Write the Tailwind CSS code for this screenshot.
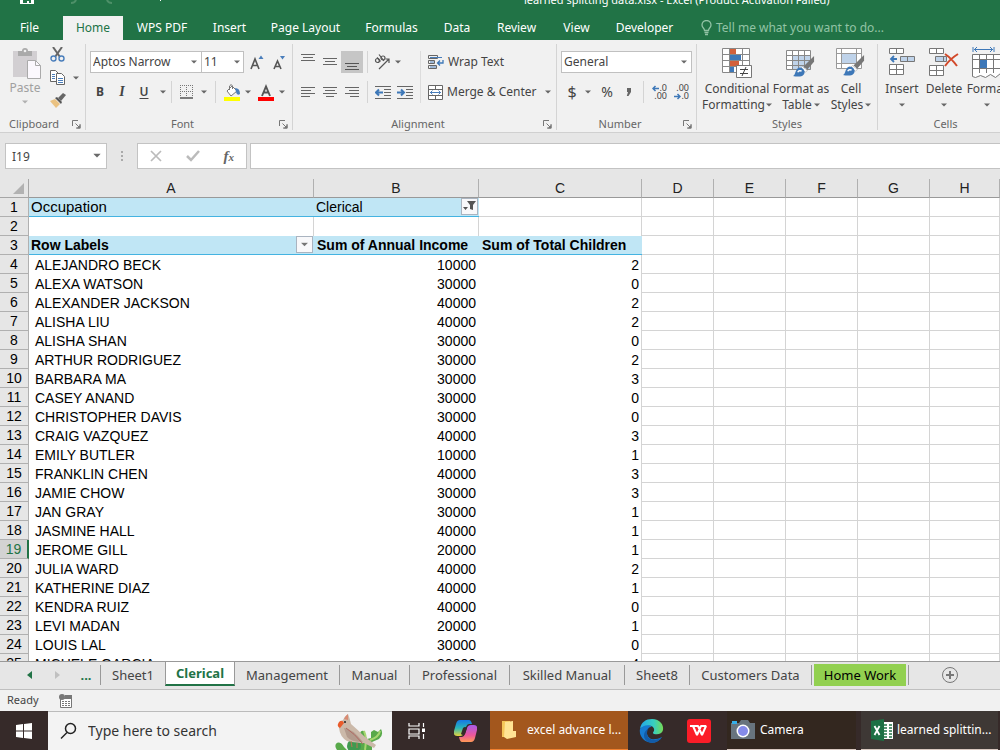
<!DOCTYPE html>
<html lang="en">
<head>
<meta charset="utf-8">
<title>learned splitting data.xlsx - Excel</title>
<script src="https://cdn.jsdelivr.net/npm/@tailwindcss/browser@4"></script>
</head>
<body class="h-screen overflow-hidden flex flex-col bg-[#e6e6e6] text-xs text-[#444] font-['Noto_Sans','Open_Sans',sans-serif]">

<svg class="hidden">
  <symbol id="caret" viewBox="0 0 6 4"><path d="M0 .5h6L3 3.500z" fill="currentColor" fill-opacity=".8"/></symbol>
  <symbol id="launcher" viewBox="0 0 9 9"><path d="M.5 6V.5H6M3.500 3.500l4 4M8 4v4H4" fill="none" stroke="#777"/><path d="M8.500 4.500v4h-4z" fill="#777"/></symbol>
  <symbol id="brush" viewBox="0 0 24 24"><path d="M23 1v6l-7 8-4-3z" fill="#777"/><path d="M11 12l5 4-2 2-5-4z" fill="#fff" stroke="#999" stroke-width=".6"/><path d="M8 13c3 0 6 3 5 6-1 4-7 4-12 3 3-1 2-8 7-9z" fill="#3e78b8"/><path d="M6 18c1-2 3-2 4-1" fill="none" stroke="#fff" stroke-width="1.500"/></symbol>
</svg>

<header class="shrink-0 bg-[#217346] text-white">
  <div class="h-4 relative overflow-hidden">
    <svg class="absolute left-5 top-0" width="150" height="6" viewBox="0 0 150 6"><path d="M0 0h14v4H0z" fill="#fff"/><path d="M3 0h8v3H9V1H7v2H3z" fill="#217346"/><path d="M51 3q4 0 5-3M92 3q-4 0-5-3" stroke="#4d9068" stroke-width="2" fill="none"/><path d="M140.500 0v1" stroke="#fff"/></svg>
    <h1 class="absolute left-[524px] -top-2 leading-4 text-[11px] whitespace-nowrap">learned splitting data.xlsx - Excel (Product Activation Failed)</h1>
  </div>
  <nav class="flex h-6 leading-6 whitespace-nowrap">
    <button class="w-[63px] pr-1">File</button>
    <button class="w-[60px] bg-[#f1f1f1] text-[#217346]">Home</button>
    <button class="w-[78px]">WPS PDF</button>
    <button class="w-[57px]">Insert</button>
    <button class="w-[95px]">Page Layout</button>
    <button class="w-[77px]">Formulas</button>
    <button class="w-[54px]">Data</button>
    <button class="w-[65px]">Review</button>
    <button class="w-[55px]">View</button>
    <button class="w-[81px]">Developer</button>
    <button class="ml-4 flex items-center gap-1 text-[#92c3a5]">
      <svg width="11" height="16" viewBox="0 0 11 16" fill="none" stroke="currentColor" stroke-width="1.300"><path d="M3.500 10.500C3.500 8 1 8 1 5a4.500 4.500 0 019 0c0 3-2.500 3-2.500 5.500zM3.500 12.500h4M4 14.500h3"/></svg>
      Tell me what you want to do...
    </button>
  </nav>
</header>

<section class="shrink-0 h-[93px] flex bg-[#f1f1f1] border-b border-[#d0d0d0] pt-1 pb-[2px] overflow-hidden whitespace-nowrap" aria-label="Ribbon">

  <div class="w-[86px] shrink-0 border-r border-[#d4d4d4] flex flex-col">
    <div class="flex-1 flex">
      <button class="w-[50px] flex flex-col items-center justify-start text-[#a0a0a0] pt-1">
        <svg class="ml-1" width="30" height="32" viewBox="0 0 30 32"><path d="M1 3h24v26H1z" fill="#d2cfd2"/><path d="M6 8V3h4q0-3 3-3t3 3h4v5z" fill="#aaa"/><circle cx="13" cy="3" r="1.300" fill="#f1f1f1"/><path d="M15.500 12.500h8l5 5v13h-13z" fill="#fbf8fd" stroke="#aaa"/><path d="M23.500 12.500v5h5" fill="none" stroke="#aaa"/></svg>
        <span class="leading-4">Paste</span>
        <svg class="mt-1" width="6" height="4"><use href="#caret"/></svg>
      </button>
      <div class="flex flex-col items-start gap-2 pt-[3px]">
        <button aria-label="Cut"><svg width="15" height="15" viewBox="0 0 15 15" fill="none"><path d="M3 0l7 10M12 0L5 10" stroke="#666" stroke-width="2"/><circle cx="3.500" cy="11.500" r="2.500" stroke="#4a7ebb" stroke-width="1.400"/><circle cx="11.500" cy="11.500" r="2.500" stroke="#4a7ebb" stroke-width="1.400"/></svg></button>
        <button class="flex items-center gap-2" aria-label="Copy"><svg width="15" height="15" viewBox="0 0 15 15" fill="#fff" stroke="#666"><path d="M.5.5h5l3 3v8h-8z"/><path d="M2 4.500h3M2 6.500h3M2 8.500h3" stroke="#4a7ebb"/><path d="M6.500 3.500h5l3 3v8h-8z"/><path d="M8 8.500h5M8 10.500h5M8 12.500h5" stroke="#4a7ebb"/></svg><svg width="6" height="4"><use href="#caret"/></svg></button>
        <button aria-label="Format Painter"><svg width="16" height="15" viewBox="0 0 16 15"><path d="M0 8l5-2 5 5-4 4z" fill="#eac282"/><path d="M5 5l2-1 5 5-1 2z" fill="#555"/><path d="M8 5l5-5 3 2-5 6z" fill="#666"/></svg></button>
      </div>
    </div>
    <div class="h-3 leading-3 flex justify-between pl-[9px] pr-1 items-center text-[11px] text-[#666]">Clipboard <svg width="9" height="9"><use href="#launcher"/></svg></div>
  </div>

  <div class="w-[207px] shrink-0 border-r border-[#d4d4d4] flex flex-col">
    <div class="flex-1 flex flex-col gap-2 pt-[7px] pl-1">
      <div class="flex items-center h-[22px]">
        <label class="relative"><select aria-label="Font name" class="appearance-none block w-[112px] h-[22px] border border-[#c0c0c0] bg-white px-[2px]"><option>Aptos Narrow</option></select><svg class="absolute right-[5px] top-[9px]" width="6" height="4"><use href="#caret"/></svg></label>
        <label class="relative -ml-px"><select aria-label="Font size" class="appearance-none block w-[43px] h-[22px] border border-[#c0c0c0] bg-white px-[2px]"><option>11</option></select><svg class="absolute right-1 top-[9px]" width="6" height="4"><use href="#caret"/></svg></label>
        <button class="ml-[6px] w-4" aria-label="Increase font size"><svg width="14" height="15" viewBox="0 0 14 15"><path d="M1 14L5 4l4 10M2.500 10.500h5" fill="none" stroke="#555" stroke-width="1.600"/><path d="M8.500 4l2.500-3.500L13.500 4z" fill="#4a7ebb"/></svg></button>
        <button class="ml-[6px] w-4" aria-label="Decrease font size"><svg width="14" height="15" viewBox="0 0 14 15"><path d="M2 14l3.500-8L9 14M3 11.500h5" fill="none" stroke="#555" stroke-width="1.600"/><path d="M8 1h5l-2.500 3.500z" fill="#4a7ebb"/></svg></button>
      </div>
      <div class="flex items-center h-[22px]">
        <button class="w-5 font-bold">B</button>
        <button class="w-6 italic font-bold font-['Liberation_Serif',serif] text-sm">I</button>
        <button class="w-5 font-semibold underline underline-offset-2">U</button>
        <button class="w-[17px] flex justify-center" aria-label="Underline style"><svg width="6" height="4"><use href="#caret"/></svg></button>
        <i class="w-px h-[22px] bg-[#d4d4d4]"></i>
        <button class="ml-2 flex items-center gap-2" aria-label="Borders"><svg width="13" height="14" viewBox="0 0 13 14"><path d="M.5 0v12M6.500 0v12M12.500 0v12M0 .5h13M0 6.500h13" stroke="#777" stroke-dasharray="1 1" fill="none"/><path d="M0 13h13" stroke="#555" stroke-width="1.500"/></svg><svg width="6" height="4"><use href="#caret"/></svg></button>
        <i class="ml-2 w-px h-[22px] bg-[#d4d4d4]"></i>
        <button class="ml-2 flex items-center gap-[5px]" aria-label="Fill color"><svg width="16" height="17" viewBox="0 0 16 17"><path d="M3 7l5-5 5 5-6 5z" fill="#fff" stroke="#777"/><path d="M5.500 6V2q2-3 3 0v3" fill="none" stroke="#777"/><path d="M11 4q5 0 5 6-3 2-4-2z" fill="#4a7ebb"/><path d="M0 13h16v4H0z" fill="#ff0"/></svg><svg width="6" height="4"><use href="#caret"/></svg></button>
        <button class="ml-[7px] flex items-center gap-[5px]" aria-label="Font color"><svg width="16" height="17" viewBox="0 0 16 17"><path d="M4 12L8 2.500 12 12M5.500 8.500h5" fill="none" stroke="#555" stroke-width="1.900"/><path d="M0 13h16v4H0z" fill="red"/></svg><svg width="6" height="4"><use href="#caret"/></svg></button>
      </div>
    </div>
    <div class="h-3 leading-3 flex items-center pr-1 text-[11px] text-[#666]"><span class="flex-1 text-center">Font</span><svg width="9" height="9"><use href="#launcher"/></svg></div>
  </div>

  <div class="w-[264px] shrink-0 border-r border-[#d4d4d4] flex flex-col">
    <div class="flex-1 flex pt-[7px] pl-1">
      <div class="flex flex-col gap-2">
        <div class="flex items-center h-[22px]">
          <button class="size-[22px] grid place-items-center" aria-label="Top align"><svg width="14" height="16" stroke="#666"><path d="M0 .5h14M2 3.500h10M0 6.500h14"/></svg></button>
          <button class="size-[22px] grid place-items-center" aria-label="Middle align"><svg width="14" height="16" stroke="#666"><path d="M0 4.500h14M2 7.500h10M0 10.500h14"/></svg></button>
          <button class="size-[22px] grid place-items-center bg-[#c6c6c6]" aria-label="Bottom align"><svg width="14" height="16" stroke="#555"><path d="M0 9.500h14M2 12.500h10M0 15.500h14"/></svg></button>
          <i class="mx-1 w-px h-[22px] bg-[#d4d4d4]"></i>
          <button class="flex items-center gap-1 pl-[2px]" aria-label="Orientation"><svg width="17" height="16" viewBox="0 0 17 16" fill="none" stroke="#555" stroke-width="1.200"><circle cx="3.500" cy="6.500" r="2"/><path d="M3 3.500l3.500 4M5 .5L10 7"/><circle cx="9" cy="4" r="2"/><path d="M5 15L15 5M11.500 5H15v4"/></svg><svg width="6" height="4"><use href="#caret"/></svg></button>
        </div>
        <div class="flex items-center h-[22px]">
          <button class="size-[22px] grid place-items-center" aria-label="Align left"><svg width="14" height="12" stroke="#666"><path d="M0 1.500h14M0 4.500h10M0 7.500h14M0 10.500h9"/></svg></button>
          <button class="size-[22px] grid place-items-center" aria-label="Center"><svg width="14" height="12" stroke="#666"><path d="M0 1.500h14M2 4.500h10M0 7.500h14M3 10.500h8"/></svg></button>
          <button class="size-[22px] grid place-items-center" aria-label="Align right"><svg width="14" height="12" stroke="#666"><path d="M0 1.500h14M4 4.500h10M0 7.500h14M5 10.500h9"/></svg></button>
          <i class="mx-1 w-px h-[22px] bg-[#d4d4d4]"></i>
          <button class="size-[22px] grid place-items-center" aria-label="Decrease indent"><svg width="16" height="13" fill="none" stroke="#666"><path d="M0 .5h16M9 3.500h7M9 6.500h7M9 9.500h7M0 12.500h16"/><path d="M1 6.500h7M4 3.500l-3 3 3 3" stroke="#3e78b8" stroke-width="2"/></svg></button>
          <button class="size-[22px] grid place-items-center" aria-label="Increase indent"><svg width="16" height="13" fill="none" stroke="#666"><path d="M0 .5h16M9 3.500h7M9 6.500h7M9 9.500h7M0 12.500h16"/><path d="M0 6.500h7M4 3.500l3 3-3 3" stroke="#3e78b8" stroke-width="2"/></svg></button>
        </div>
      </div>
      <i class="ml-1 w-px h-[52px] bg-[#dcdcdc]"></i>
      <div class="ml-[7px] flex flex-col gap-2">
        <button class="flex items-center gap-1 h-[22px]"><svg width="16" height="16" viewBox="0 0 16 16" fill="none" stroke="#666"><path d="M.5 1.500h9v3h-9z M.5 6.500h6v3h-6zM.5 11.500h8v3h-8z"/><path d="M2 3.500h12M2 8h4M2 13h6" stroke="#4a7ebb"/><path d="M15 6v3h-5M12 6.500L9.500 9l2.500 2.500" stroke="#3e78b8" stroke-width="1.300"/></svg>Wrap Text</button>
        <button class="flex items-center gap-1 h-[22px]"><svg width="15" height="15" viewBox="0 0 15 15" fill="#fff" stroke="#666"><path d="M.5.5h14v14H.5zM.5 4.500h14M.5 10.500h14M7.500.5v4M7.500 10.500v4"/><path d="M2 7.500h11M4.500 5.500l-2 2 2 2M10.500 5.500l2 2-2 2" stroke="#4a7ebb" fill="none"/></svg>Merge &amp; Center<svg class="ml-1" width="6" height="4"><use href="#caret"/></svg></button>
      </div>
    </div>
    <div class="h-3 leading-3 flex items-center pr-1 text-[11px] text-[#666]"><span class="flex-1 text-center">Alignment</span><svg width="9" height="9"><use href="#launcher"/></svg></div>
  </div>

  <div class="w-[140px] shrink-0 border-r border-[#d4d4d4] flex flex-col">
    <div class="flex-1 flex flex-col gap-2 pt-[7px] px-1">
      <label class="relative"><select aria-label="Number format" class="appearance-none block w-full h-[22px] border border-[#c0c0c0] bg-white px-[2px]"><option>General</option></select><svg class="absolute right-[5px] top-[9px]" width="6" height="4"><use href="#caret"/></svg></label>
      <div class="flex items-center h-[22px]">
        <button class="w-[22px] text-base leading-4" aria-label="Accounting format">$</button>
        <svg width="6" height="4" class="mx-[2px]"><use href="#caret"/></svg>
        <button class="w-[28px] text-sm leading-4">%</button>
        <button class="w-4 grid place-items-center" aria-label="Comma style"><svg width="6" height="9" viewBox="0 0 6 9"><path d="M1 0h4v4L2.500 8H.8L2 4H1z" fill="#666"/></svg></button>
        <i class="ml-[6px] w-px h-[22px] bg-[#d4d4d4]"></i>
        <button class="ml-[7px] w-4 h-4 flex flex-col text-[9px] leading-2 items-end" aria-label="Increase decimal"><span class="flex items-center"><svg width="7" height="7" fill="none" stroke="#3e78b8" stroke-width="1.500"><path d="M1 3.500h6M3.500 1L1 3.500 3.500 6"/></svg>.0</span><span>.00</span></button>
        <button class="ml-[6px] w-4 h-4 flex flex-col text-[9px] leading-2 items-end" aria-label="Decrease decimal"><span>.00</span><span class="flex items-center"><svg width="7" height="7" fill="none" stroke="#3e78b8" stroke-width="1.500"><path d="M0 3.500h6M3.500 1L6 3.500 3.500 6"/></svg>.0</span></button>
      </div>
    </div>
    <div class="h-3 leading-3 flex items-center pr-1 text-[11px] text-[#666]"><span class="flex-1 text-center">Number</span><svg width="9" height="9"><use href="#launcher"/></svg></div>
  </div>

  <div class="w-[181px] shrink-0 border-r border-[#d4d4d4] flex flex-col">
    <div class="flex-1 flex pl-[5px] pt-[3px] leading-4">
      <button class="w-[70px] flex flex-col items-center justify-start">
        <svg width="30" height="32" viewBox="0 0 30 32"><path d="M.5 1.500h27v24H.5z" fill="#fff"/><path d="M8 2h6v5H8zM8 14h9v5H8z" fill="#d2613c"/><path d="M8 8h11v5H8zM8 20h4v5H8z" fill="#3e78b8"/><path d="M.5 1.500h27v24H.5zM.5 7.500h27M.5 13.500h27M.5 19.500h27M7.500 1v24M20.500 1v24" fill="none" stroke="#888"/><path d="M14.500 18.500h15v12h-15z" fill="#fff" stroke="#777"/><path d="M18 22.500h8M18 26.500h8M24 20l-4 9" stroke="#444"/></svg>
        <span class="mt-[2px]">Conditional</span>
        <span class="flex items-center gap-px">Formatting <svg width="6" height="4"><use href="#caret"/></svg></span>
      </button>
      <button class="w-[58px] flex flex-col items-center justify-start">
        <svg width="30" height="32" viewBox="0 0 30 32"><path d="M.5 3.500h24v19H.5z" fill="#fff"/><path d="M6 8h19v15H6z" fill="#bfd3ea"/><path d="M.5 3.500h24v19H.5zM.5 8.500h24M.5 13.500h24M.5 18.500h24M6.500 3v20M12.500 3v20M18.500 3v20" fill="none" stroke="#888"/><svg x="6" y="8" width="23" height="23"><use href="#brush"/></svg></svg>
        <span class="mt-[2px]">Format as</span>
        <span class="flex items-center gap-[2px]">Table <svg width="6" height="4"><use href="#caret"/></svg></span>
      </button>
      <button class="w-[42px] flex flex-col items-center justify-start">
        <svg width="30" height="32" viewBox="0 0 30 32"><path d="M.5 1.500h25v20H.5z" fill="#fff"/><path d="M6 6h14v11H6z" fill="#bfd3ea"/><path d="M.5 1.500h25v20H.5zM.5 6.500h25M.5 16.500h25M5.500 1v20M20.500 1v20" fill="none" stroke="#999"/><svg x="6" y="7" width="23" height="23"><use href="#brush"/></svg></svg>
        <span class="mt-[2px]">Cell</span>
        <span class="flex items-center gap-[2px]">Styles <svg width="6" height="4"><use href="#caret"/></svg></span>
      </button>
    </div>
    <div class="h-3 leading-3 text-center text-[11px] text-[#666]">Styles</div>
  </div>

  <div class="w-[135px] shrink-0 flex flex-col">
    <div class="flex-1 flex pl-[3px] pt-[3px] leading-4">
      <button class="w-[42px] flex flex-col items-center justify-start">
        <svg width="26" height="32" viewBox="0 0 26 32" fill="#fff" stroke="#777"><path d="M.5 1.500h14v5H.5zM7.500 1v6M.5 17.500h14v10H.5zM.5 22.500h14M7.500 17v11"/><path d="M11.500 9.500h14v5h-14zM18.500 9v6" fill="#bfd3ea"/><path d="M1.500 12H8M5 9l-3 3 3 3" stroke="#3e78b8" stroke-width="1.800" fill="none"/></svg>
        <span class="mt-[2px]">Insert</span><svg class="mt-[6px]" width="6" height="4"><use href="#caret"/></svg>
      </button>
      <button class="w-[42px] flex flex-col items-center justify-start">
        <svg width="30" height="32" viewBox="0 0 30 32" fill="#fff" stroke="#777"><path d="M.5 1.500h14v5H.5zM7.500 1v6M.5 18.500h14v10H.5zM.5 23.500h14M7.500 18v11"/><path d="M6.500 9.500h11v5h-11zM14.500 9v6" fill="#bfd3ea"/><path d="M16 7q6 4 12 12M29 7q-8 5-13 12" stroke="#d2492a" stroke-width="2" fill="none"/></svg>
        <span class="mt-[2px]">Delete</span><svg class="mt-[6px]" width="6" height="4"><use href="#caret"/></svg>
      </button>
      <button class="w-11 flex flex-col items-center justify-start">
        <svg width="30" height="32" viewBox="0 0 30 32" fill="#fff" stroke="#777"><path d="M.5 7.500h28v19l-5 4-5-3-5 3-5-2-5 2-3-1zM.5 12.500h28M.5 21.500h28M7.500 7v19M14.500 7v19M21.500 7v19"/><path d="M8 13h7v8H8z" fill="#3e78b8" stroke="none"/><path d="M1 0v5M22 0v5M2 2.500h19M5 0L2.500 2.500 5 5M18 0l2.500 2.500L18 5" stroke="#3e78b8" fill="none"/></svg>
        <span class="mt-[2px]">Format</span><svg class="mt-[6px]" width="6" height="4"><use href="#caret"/></svg>
      </button>
    </div>
    <div class="h-3 leading-3 text-center text-[11px] text-[#666]">Cells</div>
  </div>
</section>

<section class="shrink-0 h-[46px] pt-[10px] pl-[5px] flex items-start">
  <label class="relative"><input aria-label="Name box" value="I19" class="block w-[102px] h-[26px] border border-[#c3c3c3] bg-white px-[6px]"><svg class="absolute right-[6px] top-[10px]" width="8" height="5" viewBox="0 0 6 4"><use href="#caret"/></svg></label>
  <svg class="mx-[13px] mt-2" width="4" height="12" fill="#aaa"><path d="M1 0h2v2H1zM1 4h2v2H1zM1 8h2v2H1z"/></svg>
  <div class="w-[110px] h-[26px] bg-white border border-[#c3c3c3] flex items-center justify-around">
    <button aria-label="Cancel"><svg width="12" height="12" stroke="#bbb" stroke-width="1.700"><path d="M1 1l10 10M11 1L1 11"/></svg></button>
    <button aria-label="Enter"><svg width="14" height="12" fill="none" stroke="#bbb" stroke-width="2.500"><path d="M1 6l4 4 8-9"/></svg></button>
    <button class="italic font-bold text-[15px] leading-4 text-[#666] font-['Liberation_Serif',serif]" aria-label="Insert function">f<span class="text-[11px]">x</span></button>
  </div>
  <input aria-label="Formula bar" class="ml-[3px] flex-1 min-w-0 h-[26px] bg-white border border-r-0 border-[#c3c3c3] px-1">
</section>

<main class="flex-1 min-h-0 overflow-hidden bg-white">
  <table class="w-full table-fixed border-separate border-spacing-0 text-sm leading-[18px] text-black font-['Liberation_Sans',Arial,sans-serif] whitespace-nowrap">
    <colgroup><col class="w-[29px]"><col class="w-[285px]"><col class="w-[165px]"><col class="w-[163px]"><col class="w-[72px]"><col class="w-[72px]"><col class="w-[72px]"><col class="w-[72px]"><col></colgroup>
    <thead id="columns"></thead>
    <tbody id="cells"></tbody>
  </table>
</main>

<nav class="shrink-0 h-7 flex border-t border-[#999] bg-[#e6e6e6] text-[13px] leading-6 whitespace-nowrap overflow-hidden" aria-label="Sheets">
  <button class="w-[58px] h-[26px] grid place-items-center" aria-label="Previous sheet"><svg width="5" height="8"><path d="M5 0v8L0 4z" fill="#217346"/></svg></button>
  <button class="grid place-items-center h-[26px] -ml-1 w-[14px]" aria-label="Next sheet"><svg width="5" height="8" class="ml-[-8px]"><path d="M0 0v8l5-4z" fill="#c0c0c0"/></svg></button>
  <button class="h-[26px] w-[32px] pl-1 font-bold text-[#217346]">...</button>
  <i class="w-px h-5 mt-[3px] bg-[#999]"></i>
  <button class="h-[26px] w-16">Sheet1</button>
  <button class="w-[70px] h-[25px] -mt-px bg-white border-x border-[#999] border-b-2 border-b-[#217346] font-bold text-[#217346]">Clerical</button>
  <button class="h-[26px] w-[104px]">Management</button>
  <i class="w-px h-5 mt-[3px] bg-[#999]"></i>
  <button class="h-[26px] w-[69px]">Manual</button>
  <i class="w-px h-5 mt-[3px] bg-[#999]"></i>
  <button class="h-[26px] w-[99px]">Professional</button>
  <i class="w-px h-5 mt-[3px] bg-[#999]"></i>
  <button class="h-[26px] w-[114px]">Skilled Manual</button>
  <i class="w-px h-5 mt-[3px] bg-[#999]"></i>
  <button class="h-[26px] w-16">Sheet8</button>
  <i class="w-px h-5 mt-[3px] bg-[#999]"></i>
  <button class="h-[26px] w-[121px]">Customers Data</button>
  <i class="w-px h-5 mt-[3px] bg-[#999]"></i>
  <button class="w-[92px] h-[22px] mt-[2px] ml-[2px] leading-[22px] bg-[#92d050] text-black">Home Work</button>
  <i class="ml-[2px] w-px h-5 mt-[3px] bg-[#999]"></i>
  <button class="ml-[33px] h-[26px]" aria-label="New sheet"><svg width="16" height="16" fill="none" stroke="#777"><circle cx="8" cy="8" r="7.500"/><path d="M8 4v8M4 8h8" stroke-width="2"/></svg></button>
</nav>

<footer class="shrink-0 h-[22px] flex items-center gap-5 pl-[7px] border-t border-[#bfbfbf] bg-[#f1f1f1] text-[11px]">
  Ready
  <svg width="14" height="14" viewBox="0 0 14 14"><path d="M1.500 4.500h11v9h-11z" fill="#fff" stroke="#777"/><path d="M6 1h7v4H6z" fill="#777"/><circle cx="3" cy="3" r="3" fill="#777"/><path d="M3 7.500h8M3 9.500h8M3 11.500h8" stroke="#777" stroke-dasharray="2 1"/></svg>
</footer>

<div class="shrink-0 h-[39px] flex bg-[#362a29] text-white whitespace-nowrap overflow-hidden" role="toolbar" aria-label="Taskbar">
  <button class="w-12 grid place-items-center" aria-label="Start"><svg width="16" height="16" fill="#fff"><path d="M0 2l7-1v6.500H0zM8 .9L16 0v7.500H8zM0 8.500h7V15l-7-1zM8 8.500h8V16l-8-1z"/></svg></button>
  <label class="w-[344px] flex items-center pl-3 bg-[#f3f3f3] border-t border-[#bbb] text-[#333]">
    <svg width="17" height="18" fill="none" stroke="#222" stroke-width="1.500"><circle cx="10.500" cy="6.500" r="5"/><path d="M7 10.500L1 16.500"/></svg>
    <input aria-label="Search" placeholder="Type here to search" class="ml-[11px] flex-1 min-w-0 text-sm placeholder:text-[#333]">
    <svg class="mr-2 self-end" width="50" height="37" viewBox="0 0 50 37">
      <path d="M3 37c-5-7 3-11 7-3l3 3zM26 37V22q0-5 4-4l3 8 4-1V19l3-2 4 2 3-3q3 6-2 10l-7 3v8z" fill="#58a94a"/><path d="M30 18q3 6 1 19M46 18q-1 6-10 9" stroke="#a6d66f" stroke-width="2" fill="none"/><circle cx="20" cy="33" r="7" fill="#3f9a50"/>
      <path d="M14 1q-3 2-5 6-5 2-4 8 1 9 8 13 10 2 17 2l10 5 2-3-11-8Q24 17 17 11q-1-5-3-10z" fill="#cbb9a9"/><path d="M10 15q8 0 19 14-12 0-16-5z" fill="#b39b8d"/><path d="M12 15q8 5 17 16" stroke="#b06a62" fill="none"/><path d="M14 1q-3 2-4 5l4 1z" fill="#d98a72"/><path d="M5 9q3-3 5 1l-4 5q-4-2-1-6z" fill="#e95b2b"/><circle cx="11" cy="9" r="1" fill="#222"/><path d="M17 28l1 6M23 30v5" stroke="#b75"/>
    </svg>
  </label>
  <button class="w-[49px] grid place-items-center" aria-label="Task view"><svg width="17" height="16" fill="none" stroke="#fff" stroke-width="1.200"><path d="M1 0v3h10V0M1 6h10v5H1zM1 16v-3h10v3M15.500 0v4M15.500 11v5"/><path d="M14 5.500h3v3.500h-3z" fill="#fff" stroke="none"/></svg></button>
  <button class="w-[49px] grid place-items-center" aria-label="Copilot"><svg width="23" height="22" viewBox="0 0 23 22">
    <defs><linearGradient id="cpA" x2="0" y2="1"><stop stop-color="#1677e6"/><stop offset=".5" stop-color="#29b6b9"/><stop offset="1" stop-color="#e5d33c"/></linearGradient><linearGradient id="cpB" x2="0" y2="1"><stop stop-color="#a85be9"/><stop offset=".6" stop-color="#ed579a"/><stop offset="1" stop-color="#ff9a55"/></linearGradient></defs>
    <path d="M6 0h9q2 0 3 4h-3q-2 0-3 3l-2 6q-1 3-4 3H3q-4 0-3-5l2-7Q3 0 6 0z" fill="url(#cpA)"/><path d="M17 22H8q-2 0-3-5h3q2 0 3-3l2-6q1-3 4-3h3q4 0 3 5l-2 8q-1 4-4 4z" fill="url(#cpB)"/><path d="M9 8L7 14q2 2 4 0l2-6q-2-2-4 0z" fill="#362a29"/></svg></button>
  <button class="w-[138px] flex items-center gap-[11px] pl-3 bg-[#a3571d] border-b border-[#f08030]"><svg width="14" height="20"><path d="M0 1h8v16H0z" fill="#f5c65a"/><path d="M3 2l8-1v10h3v6l-9 2-3-2z" fill="#ffe394"/></svg>excel advance l...</button>
  <button class="w-[47px] grid place-items-center" aria-label="Edge"><svg width="25" height="25" viewBox="0 0 25 25">
    <defs><linearGradient id="edA"><stop stop-color="#23a7e8"/><stop offset=".6" stop-color="#38cfc0"/><stop offset="1" stop-color="#76db54"/></linearGradient></defs>
    <path d="M1 11C2 4 7 1 13 1c8 0 12 6 11 11-1 4-5 5-9 4q-2-1 0-3c1-4-3-6-6-5-4 0-7 2-8 3z" fill="url(#edA)"/><path d="M1 11c3-4 9-5 12-2-4 0-6 3-5 7 2 7 9 6 15 3-3 5-9 7-14 5C3 22 0 16 1 11z" fill="#167bd1"/><path d="M10 10c-4 5-2 12 6 12q4 0 7-3c-3 5-9 7-14 5-5-3-6-10 1-14z" fill="#125ba8"/></svg></button>
  <button class="w-[47px] grid place-items-center" aria-label="WPS Office"><svg width="24" height="24"><rect width="24" height="24" rx="3" fill="#fb1d28"/><path d="M3 7h8l4 9 4-9h-5l-4 9-4-9M7.500 7l3 0" stroke="#fff" stroke-width="2" stroke-linejoin="bevel" fill="none"/></svg></button>
  <button class="ml-[5px] w-[129px] flex items-center gap-1 pl-1 bg-[#33271f] border-b border-[#d8c8c0]"><svg width="25" height="20"><path d="M0 3h8l2-3h7l2 3h5v16H0z" fill="#68747e"/><path d="M1 1h5v3H1z" fill="#35aee8"/><circle cx="12" cy="11" r="6.500" fill="#fff"/><circle cx="12" cy="11" r="5" fill="#858bea"/></svg>Camera</button>
  <button class="ml-[5px] w-[137px] flex items-center gap-1 pl-[10px] bg-[#3e3835] border-b border-[#d8c8c0]"><svg width="22" height="22"><path d="M11 3h11v17H11z" fill="#fff"/><path d="M13 6h3M18 6h3M13 9h3M18 9h3M13 12h3M18 12h3M13 15h3M18 15h3M13 18h3M18 18h3" stroke="#217346" stroke-width="1.500"/><path d="M0 2l13-2v22L0 20z" fill="#1d7044"/><path d="M3.500 7l5 9M8.500 7l-5 9" stroke="#fff" stroke-width="1.800"/></svg>learned splittin...</button>
</div>

<script>
const people = [
  ["ALEJANDRO BECK", 10000, 2], ["ALEXA WATSON", 30000, 0], ["ALEXANDER JACKSON", 40000, 2],
  ["ALISHA LIU", 40000, 2], ["ALISHA SHAN", 30000, 0], ["ARTHUR RODRIGUEZ", 30000, 2],
  ["BARBARA MA", 30000, 3], ["CASEY ANAND", 30000, 0], ["CHRISTOPHER DAVIS", 30000, 0],
  ["CRAIG VAZQUEZ", 40000, 3], ["EMILY BUTLER", 10000, 1], ["FRANKLIN CHEN", 40000, 3],
  ["JAMIE CHOW", 30000, 3], ["JAN GRAY", 30000, 1], ["JASMINE HALL", 40000, 1],
  ["JEROME GILL", 20000, 1], ["JULIA WARD", 40000, 2], ["KATHERINE DIAZ", 40000, 1],
  ["KENDRA RUIZ", 40000, 0], ["LEVI MADAN", 20000, 1], ["LOUIS LAL", 30000, 0],
  ["MICHELE GARCIA", 20000, 4]
];
const grid = "border-r border-b border-[#d4d4d4]";
const band = "bg-[#c0e6f5] border-b border-[#44b3e1]";
const plain = `<td class="h-[19px] ${grid}"></td>`;
const rowHead = n => `<th scope="row" class="h-[19px] p-0 font-normal border-r border-b border-[#b0b0b0] ${n === 19 ? "bg-[#d3d3d3] text-[#217346] border-r-2 border-r-[#217346]" : "bg-[#e6e6e6]"}">${n}</th>`;
const filterButton = (label, icon) => `<button aria-label="${label}" class="size-[17px] bg-[#f8f8fa] border border-[#aab4c0] grid place-items-center">${icon}</button>`;
const caret = `<svg width="7" height="5" viewBox="0 0 6 4" color="#555"><use href="#caret"/></svg>`;
const funnel = `<svg width="13" height="11"><path d="M4 0h9L10 4v5L7 8V4zM0 6h5L2.500 9z" fill="#555"/></svg>`;

document.getElementById("columns").innerHTML =
  `<tr><th class="h-[19px] p-0 bg-[#e6e6e6] border-r border-b border-[#a6a6a6]"><svg class="ml-auto mr-1" width="11" height="11"><path d="M11 0v11H0z" fill="#b2b2b2"/></svg></th>` +
  [..."ABCDEFGH"].map(c => `<th scope="col" class="h-[19px] p-0 font-normal bg-[#e6e6e6] text-[#222] border-r border-b border-[#b0b0b0] border-b-[#999]">${c}</th>`).join("") + `</tr>`;

document.getElementById("cells").innerHTML =
  `<tr>${rowHead(1)}<td class="p-0 pl-[2px] text-[15px] leading-[18px] ${band}">Occupation</td><td class="p-0 ${band}"><div class="flex justify-between pl-[2px] pr-px">Clerical${filterButton("Filter occupation", funnel)}</div></td>${plain.repeat(6)}</tr>` +
  `<tr>${rowHead(2)}${`<td class="border-r border-[#d4d4d4]"></td>`.repeat(3)}${plain.repeat(5)}</tr>` +
  `<tr class="font-bold">${rowHead(3)}<td class="p-0 ${band}"><div class="flex justify-between pl-[2px] pr-px">Row Labels${filterButton("Filter row labels", caret)}</div></td><td class="p-0 pl-[3px] ${band}">Sum of Annual Income</td><td class="p-0 pl-[3px] ${band}">Sum of Total Children</td>${plain.repeat(5)}</tr>` +
  people.map(([name, income, kids], i) =>
    `<tr>${rowHead(i + 4)}<td class="p-0 pl-[6px]">${name}</td><td class="p-0 pr-[3px] text-right">${income}</td><td class="p-0 pr-[2px] text-right border-r border-[#d4d4d4]">${kids}</td>${plain.repeat(5)}</tr>`).join("");
</script>
</body>
</html>
